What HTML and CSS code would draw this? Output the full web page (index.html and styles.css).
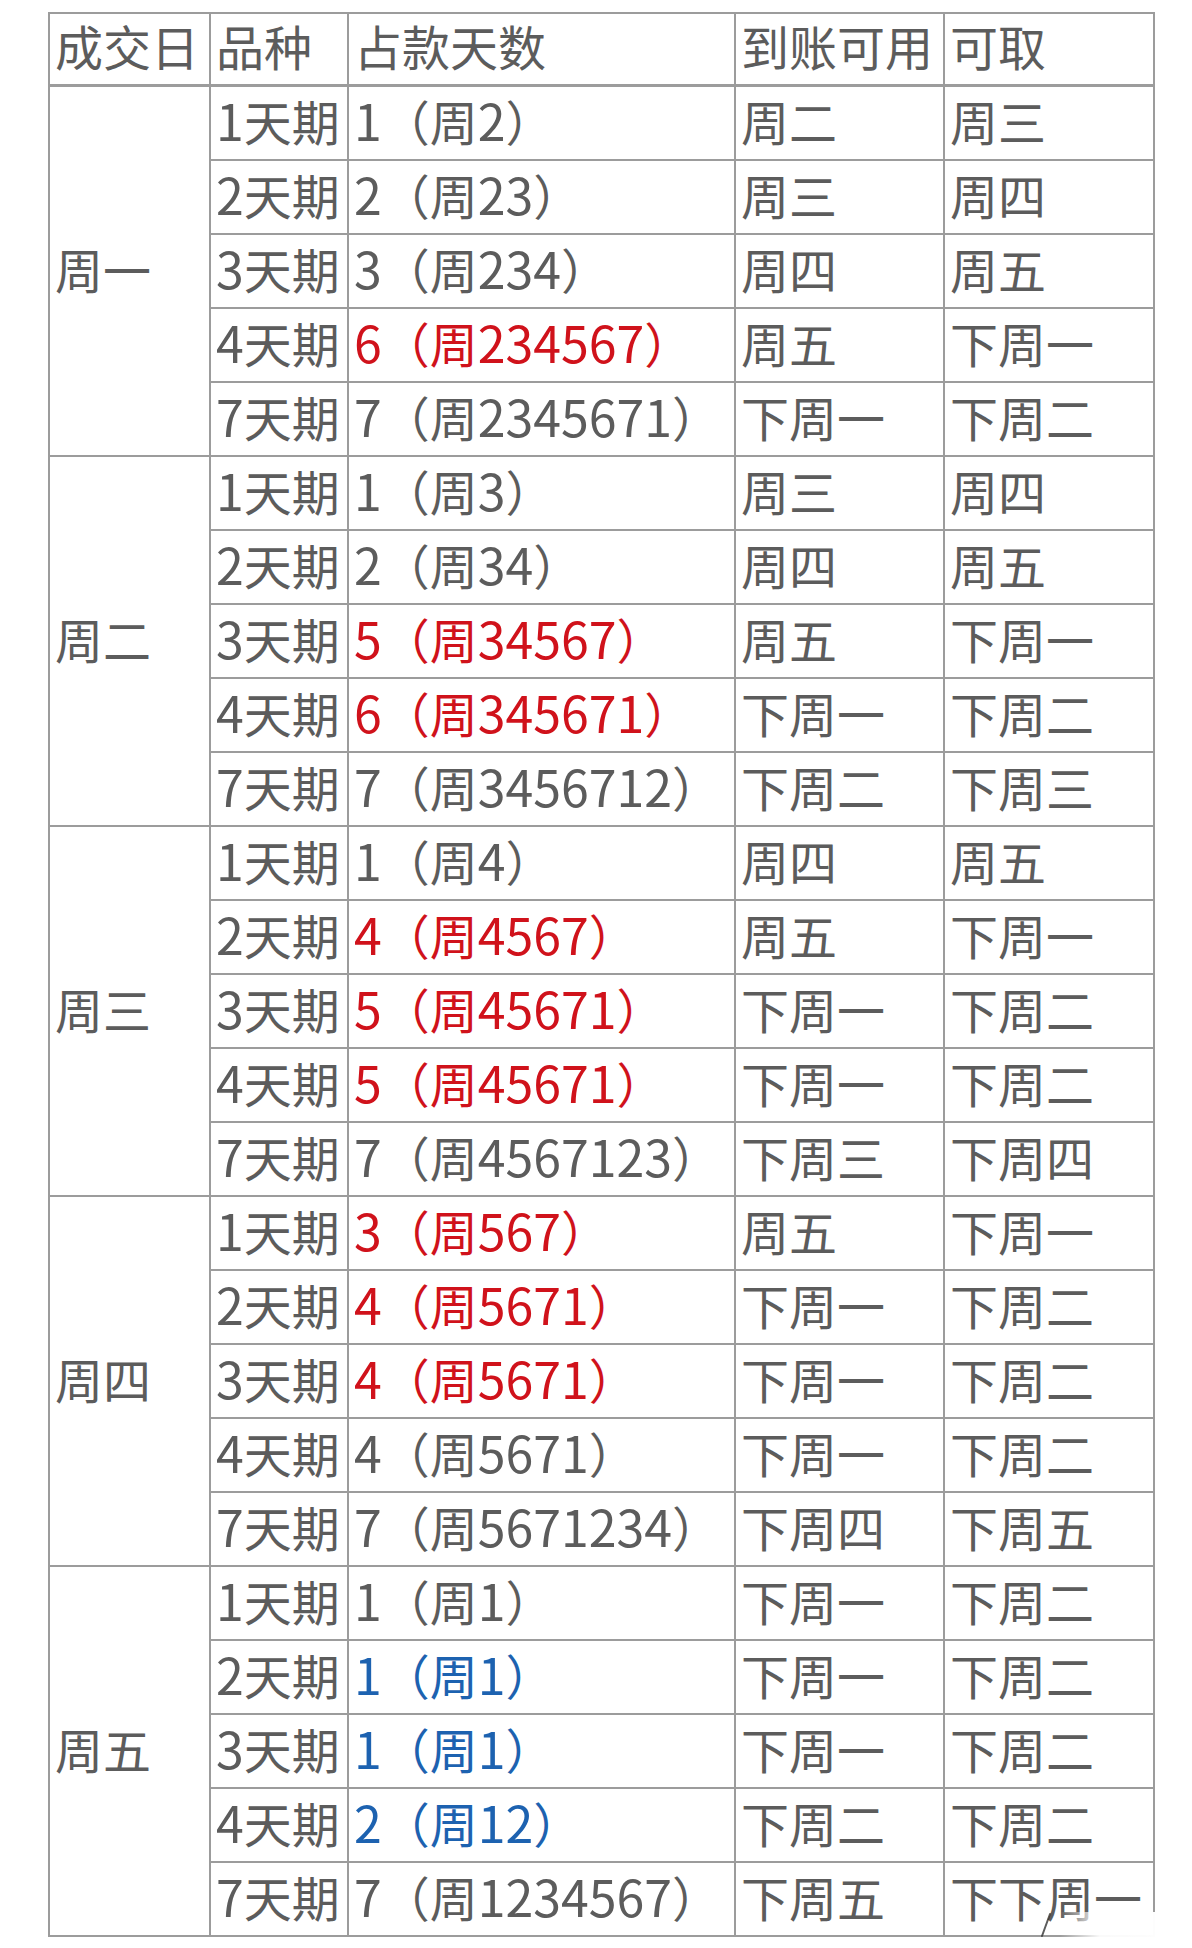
FILE: index.html
```html
<!DOCTYPE html>
<html lang="zh-CN">
<head>
<meta charset="utf-8">
<title>成交日 占款天数</title>
<link rel="stylesheet" href="styles.css">
</head>
<body>
<div class="wrap">
<table class="grid">
  <colgroup>
    <col class="c-day"><col class="c-kind"><col class="c-occ"><col class="c-avail"><col class="c-take">
  </colgroup>
  <thead>
    <tr class="head"><th>成交日</th><th>品种</th><th>占款天数</th><th>到账可用</th><th>可取</th></tr>
  </thead>
  <tbody>
    <tr><td rowspan="5">周一</td><td><span class="n">1</span>天期</td><td><span class="n">1</span>（周<span class="n">2</span>）</td><td>周二</td><td>周三</td></tr>
    <tr><td><span class="n">2</span>天期</td><td><span class="n">2</span>（周<span class="n">23</span>）</td><td>周三</td><td>周四</td></tr>
    <tr><td><span class="n">3</span>天期</td><td><span class="n">3</span>（周<span class="n">234</span>）</td><td>周四</td><td>周五</td></tr>
    <tr><td><span class="n">4</span>天期</td><td class="red"><span class="n">6</span>（周<span class="n">234567</span>）</td><td>周五</td><td>下周一</td></tr>
    <tr><td><span class="n">7</span>天期</td><td><span class="n">7</span>（周<span class="n">2345671</span>）</td><td>下周一</td><td>下周二</td></tr>
  </tbody>
  <tbody>
    <tr><td rowspan="5">周二</td><td><span class="n">1</span>天期</td><td><span class="n">1</span>（周<span class="n">3</span>）</td><td>周三</td><td>周四</td></tr>
    <tr><td><span class="n">2</span>天期</td><td><span class="n">2</span>（周<span class="n">34</span>）</td><td>周四</td><td>周五</td></tr>
    <tr><td><span class="n">3</span>天期</td><td class="red"><span class="n">5</span>（周<span class="n">34567</span>）</td><td>周五</td><td>下周一</td></tr>
    <tr><td><span class="n">4</span>天期</td><td class="red"><span class="n">6</span>（周<span class="n">345671</span>）</td><td>下周一</td><td>下周二</td></tr>
    <tr><td><span class="n">7</span>天期</td><td><span class="n">7</span>（周<span class="n">3456712</span>）</td><td>下周二</td><td>下周三</td></tr>
  </tbody>
  <tbody>
    <tr><td rowspan="5">周三</td><td><span class="n">1</span>天期</td><td><span class="n">1</span>（周<span class="n">4</span>）</td><td>周四</td><td>周五</td></tr>
    <tr><td><span class="n">2</span>天期</td><td class="red"><span class="n">4</span>（周<span class="n">4567</span>）</td><td>周五</td><td>下周一</td></tr>
    <tr><td><span class="n">3</span>天期</td><td class="red"><span class="n">5</span>（周<span class="n">45671</span>）</td><td>下周一</td><td>下周二</td></tr>
    <tr><td><span class="n">4</span>天期</td><td class="red"><span class="n">5</span>（周<span class="n">45671</span>）</td><td>下周一</td><td>下周二</td></tr>
    <tr><td><span class="n">7</span>天期</td><td><span class="n">7</span>（周<span class="n">4567123</span>）</td><td>下周三</td><td>下周四</td></tr>
  </tbody>
  <tbody>
    <tr><td rowspan="5">周四</td><td><span class="n">1</span>天期</td><td class="red"><span class="n">3</span>（周<span class="n">567</span>）</td><td>周五</td><td>下周一</td></tr>
    <tr><td><span class="n">2</span>天期</td><td class="red"><span class="n">4</span>（周<span class="n">5671</span>）</td><td>下周一</td><td>下周二</td></tr>
    <tr><td><span class="n">3</span>天期</td><td class="red"><span class="n">4</span>（周<span class="n">5671</span>）</td><td>下周一</td><td>下周二</td></tr>
    <tr><td><span class="n">4</span>天期</td><td><span class="n">4</span>（周<span class="n">5671</span>）</td><td>下周一</td><td>下周二</td></tr>
    <tr><td><span class="n">7</span>天期</td><td><span class="n">7</span>（周<span class="n">5671234</span>）</td><td>下周四</td><td>下周五</td></tr>
  </tbody>
  <tbody>
    <tr><td rowspan="5">周五</td><td><span class="n">1</span>天期</td><td><span class="n">1</span>（周<span class="n">1</span>）</td><td>下周一</td><td>下周二</td></tr>
    <tr><td><span class="n">2</span>天期</td><td class="blue"><span class="n">1</span>（周<span class="n">1</span>）</td><td>下周一</td><td>下周二</td></tr>
    <tr><td><span class="n">3</span>天期</td><td class="blue"><span class="n">1</span>（周<span class="n">1</span>）</td><td>下周一</td><td>下周二</td></tr>
    <tr><td><span class="n">4</span>天期</td><td class="blue"><span class="n">2</span>（周<span class="n">12</span>）</td><td>下周二</td><td>下周二</td></tr>
    <tr><td><span class="n">7</span>天期</td><td><span class="n">7</span>（周<span class="n">1234567</span>）</td><td>下周五</td><td>下下周一</td></tr>
  </tbody>
</table>
<div class="fade"></div>
<svg class="mark" width="60" height="40" viewBox="0 0 60 40"><path d="M6 36 L14 14" stroke="#333" stroke-width="2" fill="none" stroke-linecap="round" opacity="0.8"/></svg>
</div>
</body>
</html>
```
FILE: styles.css
```css
html, body {
  margin: 0;
  padding: 0;
  background: #ffffff;
}
.wrap {
  position: relative;
  padding: 12px 0 0 48px;
  width: 1144px;
  height: 1936px;
}
.grid {
  border-collapse: collapse;
  table-layout: fixed;
  width: 1107px;
  font-family: "Noto Sans CJK SC", "Noto Sans", sans-serif;
  font-size: 48px;
  color: #5c5c5c;
  border: 2px solid #9c9c9c;
}
.c-day { width: 161px; }
.c-kind { width: 138px; }
.c-occ { width: 387px; }
.c-avail { width: 209px; }
.c-take { width: 210px; }
.grid th, .grid td {
  border: 2px solid #9c9c9c;
  height: 67px;
  padding: 0 0 5px 5px;
  text-align: left;
  vertical-align: middle;
  font-weight: 400;
  line-height: 1.2;
  white-space: nowrap;
}
.grid .head th {
  height: 63px;
  border-bottom-width: 3px;
  padding-bottom: 7px;
}
.grid .n {
  font-size: 50px;
  line-height: 1;
}
.grid .red { color: #d0121b; }
.grid .blue { color: #1d62b0; }
.fade {
  position: absolute;
  left: 1060px;
  top: 1912px;
  width: 132px;
  height: 36px;
  background: linear-gradient(90deg, rgba(255,255,255,0) 0%, rgba(255,255,255,0.95) 30%, #fff 100%);
}
.mark {
  position: absolute;
  left: 1036px;
  top: 1900px;
}
```
